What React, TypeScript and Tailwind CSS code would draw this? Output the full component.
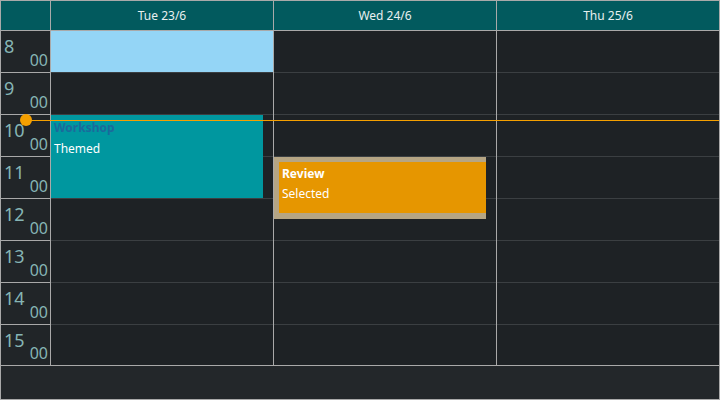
import React from "react";

const hours = [8, 9, 10, 11, 12, 13, 14, 15];
const days = ["Tue 23/6", "Wed 24/6", "Thu 25/6"];

function rowH(i: number) {
  return i === hours.length - 1 ? "h-[40px]" : "h-[42px] border-b border-[#3b3f42]";
}
function timeRowH(i: number) {
  return i === hours.length - 1 ? "h-[40px]" : "h-[42px] border-b border-[#a9a9a9]";
}

export default function App() {
  return (
    <div
      className="w-[720px] h-[400px] border border-[#a9a9a9] bg-[#1e2225] flex flex-col overflow-hidden"
      style={{ fontFamily: '"Noto Sans", "Open Sans", sans-serif' }}
    >
      {/* header */}
      <div className="flex h-[30px] border-b border-[#a9a9a9] bg-[#025a5e]">
        <div className="w-[50px] border-r border-[#a9a9a9]" />
        {days.map((d, i) => (
          <div
            key={d}
            className={`flex items-center justify-center text-[12px] text-[#e8f0f0] ${
              i < 2 ? "w-[223px] border-r border-[#a9a9a9]" : "w-[222px]"
            }`}
          >
            {d}
          </div>
        ))}
      </div>

      {/* body */}
      <div className="relative flex h-[334px]">
        {/* time column */}
        <div className="w-[50px] border-r border-[#a9a9a9] bg-[#212528] flex flex-col">
          {hours.map((h, i) => (
            <div key={h} className={`${timeRowH(i)} relative text-[#86b5b5]`}>
              <div className="absolute left-[3px] top-[4px] text-[18px] leading-[22px]">{h}</div>
              <div className="absolute right-[2px] bottom-[3px] text-[16px] leading-[18px]">00</div>
            </div>
          ))}
        </div>

        {/* day columns */}
        {days.map((d, ci) => (
          <div
            key={d}
            className={`relative flex flex-col ${ci < 2 ? "w-[223px] border-r border-[#a9a9a9]" : "w-[222px]"}`}
          >
            {hours.map((h, i) => (
              <div key={h} className={rowH(i)} />
            ))}

            {ci === 0 && (
              <>
                <div className="absolute left-0 top-0 w-[222px] h-[41px] bg-[#94d5f6]" />
                <div className="absolute left-0 top-[84px] w-[212px] h-[83px] bg-[#00979f] px-[3px] pt-[2px] text-[12px]">
                  <div className="font-bold text-[#1b6a9c] leading-[22px]">Workshop</div>
                  <div className="text-white leading-[19px]">Themed</div>
                </div>
              </>
            )}
            {ci === 1 && (
              <div className="absolute left-0 top-[126px] w-[212px] h-[62px] bg-[#b5a584] pl-[5px] pt-[5px] pb-[6px]">
                <div className="h-full bg-[#e69600] px-[3px] text-[12px] text-white">
                  <div className="font-bold leading-[21px] pt-[1px]">Review</div>
                  <div className="leading-[19px]">Selected</div>
                </div>
              </div>
            )}
          </div>
        ))}

        {/* current time indicator */}
        <div className="absolute left-[25px] right-0 top-[89px] h-px bg-[#f5a000]" />
        <div className="absolute left-[19px] top-[83px] w-[12px] h-[12px] rounded-full bg-[#f5a000]" />
      </div>

      {/* footer */}
      <div className="flex-1 border-t border-[#a9a9a9] bg-[#23272a]" />
    </div>
  );
}
